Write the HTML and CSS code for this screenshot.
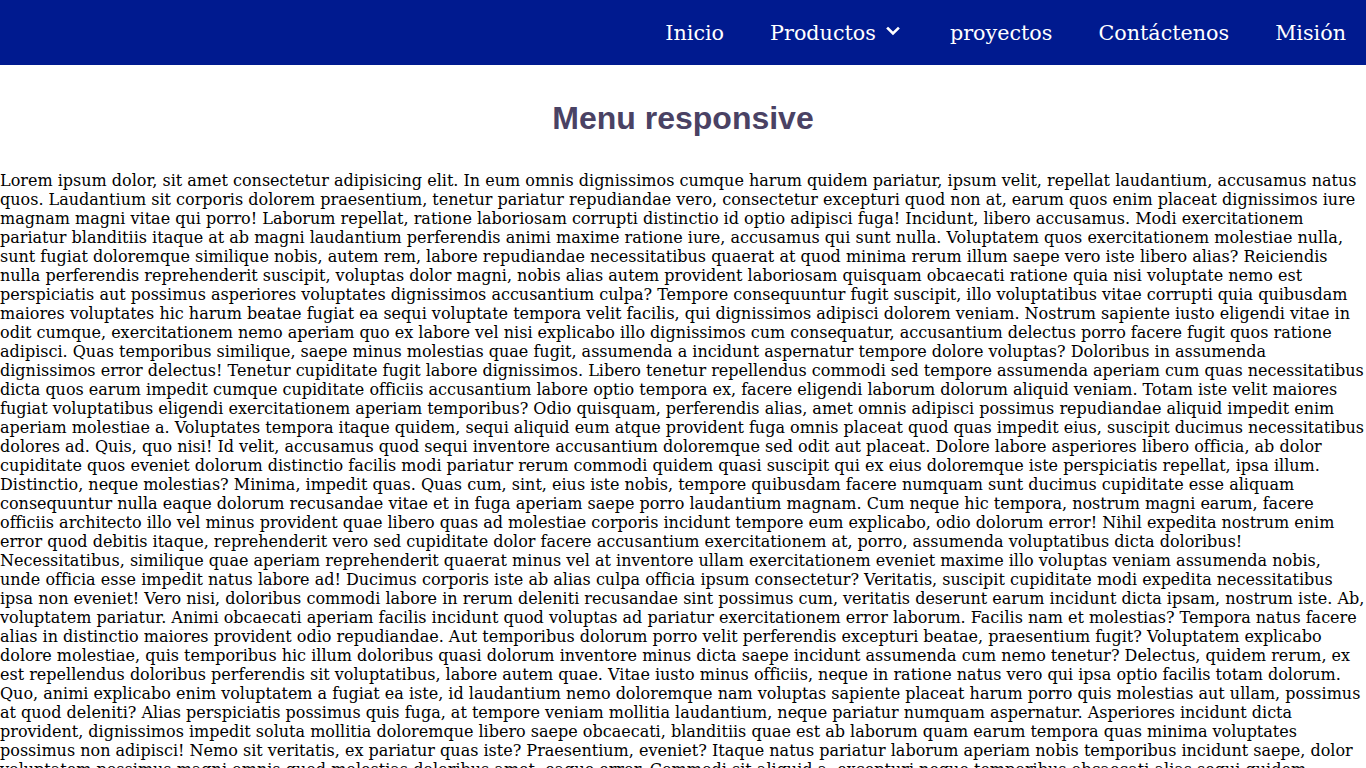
FILE: index.html
```html
<!DOCTYPE html>
<html lang="es">
<head>
<meta charset="utf-8">
<title>Menu responsive</title>
<link rel="stylesheet" href="styles.css">
</head>
<body>
<header class="topbar">
  <nav class="menu">
    <a class="menu-link" href="#">Inicio</a>
    <a class="menu-link" href="#">Productos
      <svg class="chev" viewBox="0 0 18 10" width="18" height="10" aria-hidden="true"><path d="M2 2.5 L7 7.5 L12 2.5" fill="none" stroke="#fff" stroke-width="2.6" stroke-linecap="square"/></svg>
    </a>
    <a class="menu-link" href="#">proyectos</a>
    <a class="menu-link" href="#">Contáctenos</a>
    <a class="menu-link" href="#">Misión</a>
  </nav>
</header>
<main>
  <h1 class="title">Menu responsive</h1>
  <p class="text">Lorem ipsum dolor, sit amet consectetur adipisicing elit. In eum omnis dignissimos cumque harum quidem pariatur, ipsum velit, repellat laudantium, accusamus natus quos. Laudantium sit corporis dolorem praesentium, tenetur pariatur repudiandae vero, consectetur excepturi quod non at, earum quos enim placeat dignissimos iure magnam magni vitae qui porro! Laborum repellat, ratione laboriosam corrupti distinctio id optio adipisci fuga! Incidunt, libero accusamus. Modi exercitationem pariatur blanditiis itaque at ab magni laudantium perferendis animi maxime ratione iure, accusamus qui sunt nulla. Voluptatem quos exercitationem molestiae nulla, sunt fugiat doloremque similique nobis, autem rem, labore repudiandae necessitatibus quaerat at quod minima rerum illum saepe vero iste libero alias? Reiciendis nulla perferendis reprehenderit suscipit, voluptas dolor magni, nobis alias autem provident laboriosam quisquam obcaecati ratione quia nisi voluptate nemo est perspiciatis aut possimus asperiores voluptates dignissimos accusantium culpa? Tempore consequuntur fugit suscipit, illo voluptatibus vitae corrupti quia quibusdam maiores voluptates hic harum beatae fugiat ea sequi voluptate tempora velit facilis, qui dignissimos adipisci dolorem veniam. Nostrum sapiente iusto eligendi vitae in odit cumque, exercitationem nemo aperiam quo ex labore vel nisi explicabo illo dignissimos cum consequatur, accusantium delectus porro facere fugit quos ratione adipisci. Quas temporibus similique, saepe minus molestias quae fugit, assumenda a incidunt aspernatur tempore dolore voluptas? Doloribus in assumenda dignissimos error delectus! Tenetur cupiditate fugit labore dignissimos. Libero tenetur repellendus commodi sed tempore assumenda aperiam cum quas necessitatibus dicta quos earum impedit cumque cupiditate officiis accusantium labore optio tempora ex, facere eligendi laborum dolorum aliquid veniam. Totam iste velit maiores fugiat voluptatibus eligendi exercitationem aperiam temporibus? Odio quisquam, perferendis alias, amet omnis adipisci possimus repudiandae aliquid impedit enim aperiam molestiae a. Voluptates tempora itaque quidem, sequi aliquid eum atque provident fuga omnis placeat quod quas impedit eius, suscipit ducimus necessitatibus dolores ad. Quis, quo nisi! Id velit, accusamus quod sequi inventore accusantium doloremque sed odit aut placeat. Dolore labore asperiores libero officia, ab dolor cupiditate quos eveniet dolorum distinctio facilis modi pariatur rerum commodi quidem quasi suscipit qui ex eius doloremque iste perspiciatis repellat, ipsa illum. Distinctio, neque molestias? Minima, impedit quas. Quas cum, sint, eius iste nobis, tempore quibusdam facere numquam sunt ducimus cupiditate esse aliquam consequuntur nulla eaque dolorum recusandae vitae et in fuga aperiam saepe porro laudantium magnam. Cum neque hic tempora, nostrum magni earum, facere officiis architecto illo vel minus provident quae libero quas ad molestiae corporis incidunt tempore eum explicabo, odio dolorum error! Nihil expedita nostrum enim error quod debitis itaque, reprehenderit vero sed cupiditate dolor facere accusantium exercitationem at, porro, assumenda voluptatibus dicta doloribus! Necessitatibus, similique quae aperiam reprehenderit quaerat minus vel at inventore ullam exercitationem eveniet maxime illo voluptas veniam assumenda nobis, unde officia esse impedit natus labore ad! Ducimus corporis iste ab alias culpa officia ipsum consectetur? Veritatis, suscipit cupiditate modi expedita necessitatibus ipsa non eveniet! Vero nisi, doloribus commodi labore in rerum deleniti recusandae sint possimus cum, veritatis deserunt earum incidunt dicta ipsam, nostrum iste. Ab, voluptatem pariatur. Animi obcaecati aperiam facilis incidunt quod voluptas ad pariatur exercitationem error laborum. Facilis nam et molestias? Tempora natus facere alias in distinctio maiores provident odio repudiandae. Aut temporibus dolorum porro velit perferendis excepturi beatae, praesentium fugit? Voluptatem explicabo dolore molestiae, quis temporibus hic illum doloribus quasi dolorum inventore minus dicta saepe incidunt assumenda cum nemo tenetur? Delectus, quidem rerum, ex est repellendus doloribus perferendis sit voluptatibus, labore autem quae. Vitae iusto minus officiis, neque in ratione natus vero qui ipsa optio facilis totam dolorum. Quo, animi explicabo enim voluptatem a fugiat ea iste, id laudantium nemo doloremque nam voluptas sapiente placeat harum porro quis molestias aut ullam, possimus at quod deleniti? Alias perspiciatis possimus quis fuga, at tempore veniam mollitia laudantium, neque pariatur numquam aspernatur. Asperiores incidunt dicta provident, dignissimos impedit soluta mollitia doloremque libero saepe obcaecati, blanditiis quae est ab laborum quam earum tempora quas minima voluptates possimus non adipisci! Nemo sit veritatis, ex pariatur quas iste? Praesentium, eveniet? Itaque natus pariatur laborum aperiam nobis temporibus incidunt saepe, dolor voluptatem possimus magni omnis quod molestias doloribus amet, eaque error. Commodi sit aliquid a, excepturi neque temporibus obcaecati alias sequi quidem, quibusdam illum eius dolorem nobis quod dolore laboriosam.</p>
</main>
</body>
</html>
```

FILE: styles.css
```css
* {
  box-sizing: border-box;
}

body {
  margin: 0;
  font-family: "DejaVu Serif", serif;
  background: #fff;
  color: #000;
}

.topbar {
  height: 65px;
  background: #001a8f;
  display: flex;
  align-items: center;
  justify-content: flex-end;
  padding-right: 20px;
}

.menu {
  display: flex;
  align-items: center;
  gap: 46px;
}

.menu-link {
  color: #fff;
  text-decoration: none;
  font-family: "DejaVu Serif", serif;
  font-size: 20.7px;
  display: flex;
  align-items: center;
  gap: 10px;
  line-height: 24px;
}

.chev {
  display: block;
  margin-top: -3px;
}

.title {
  margin: 35px 0 34px;
  text-align: center;
  font-family: "Liberation Sans", Arial, sans-serif;
  font-weight: bold;
  font-size: 32px;
  color: #4a4264;
}

.text {
  margin: 0;
  font-size: 16px;
}
```
